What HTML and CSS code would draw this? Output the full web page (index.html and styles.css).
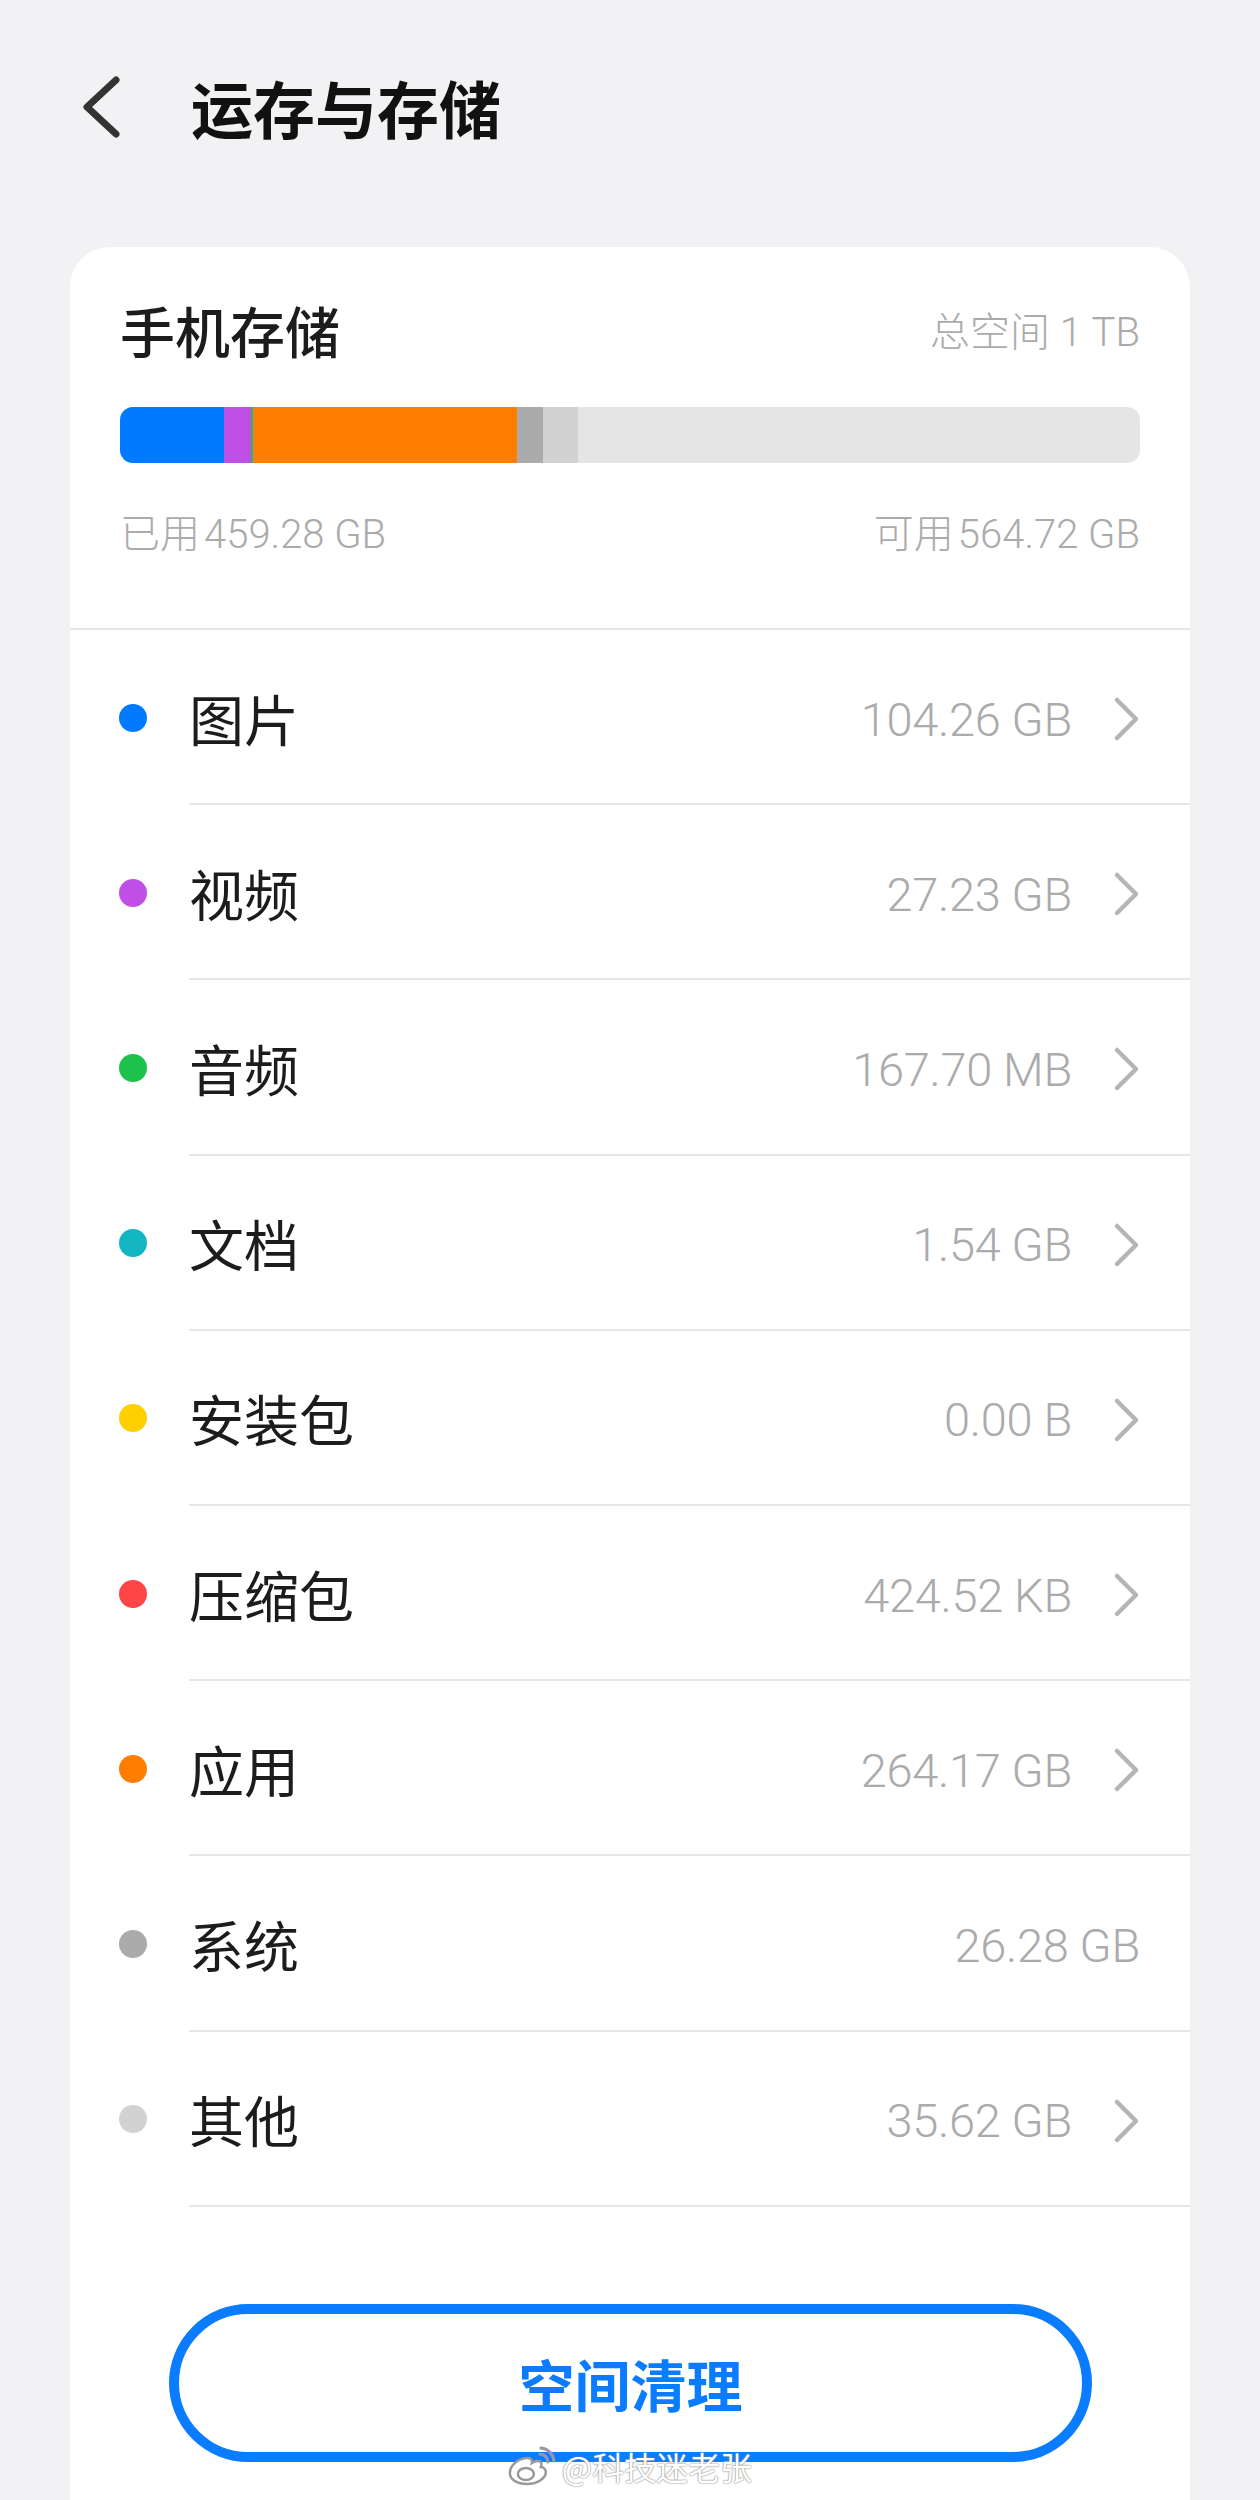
FILE: index.html
```html
<!DOCTYPE html>
<html lang="zh-CN">
<head>
  <meta charset="UTF-8">
  <title>运存与存储</title>
  <meta name="viewport" content="width=device-width, initial-scale=1.0">
  <link rel="stylesheet" href="styles.css">
</head>
<body>

  <div class="topbar">
    <svg class="back" viewBox="0 0 40 64" width="40" height="64">
      <polyline points="34,5 5,32 34,59" />
    </svg>
    <h1 class="title">运存与存储</h1>
  </div>

  <div class="card">
    <div class="summary">
      <div class="summary-head">
        <span class="summary-title">手机存储</span>
        <span class="summary-total">总空间 1 TB</span>
      </div>

      <!-- widths = size / 1024 GB -->
      <div class="usage-bar">
        <span class="seg seg-image" style="width:10.18%"></span>
        <span class="seg seg-video" style="width:2.66%"></span>
        <span class="seg seg-audio" style="width:0.1%"></span>
        <span class="seg seg-doc" style="width:0.15%"></span>
        <span class="seg seg-app" style="width:25.8%"></span>
        <span class="seg seg-system" style="width:2.57%"></span>
        <span class="seg seg-other" style="width:3.48%"></span>
      </div>

      <div class="summary-foot">
        <span>已用<span class="num">459.28 GB</span></span>
        <span>可用<span class="num">564.72 GB</span></span>
      </div>
    </div>

    <ul class="category-list">
      <li class="category">
        <span class="dot seg-image"></span>
        <div class="category-main">
          <span class="category-name">图片</span>
          <span class="category-size">104.26 GB</span>
          <svg class="arrow" viewBox="0 0 28 46" width="28" height="46"><polyline points="5,4 24,23 5,42" /></svg>
        </div>
      </li>
      <li class="category">
        <span class="dot seg-video"></span>
        <div class="category-main">
          <span class="category-name">视频</span>
          <span class="category-size">27.23 GB</span>
          <svg class="arrow" viewBox="0 0 28 46" width="28" height="46"><polyline points="5,4 24,23 5,42" /></svg>
        </div>
      </li>
      <li class="category">
        <span class="dot seg-audio"></span>
        <div class="category-main">
          <span class="category-name">音频</span>
          <span class="category-size">167.70 MB</span>
          <svg class="arrow" viewBox="0 0 28 46" width="28" height="46"><polyline points="5,4 24,23 5,42" /></svg>
        </div>
      </li>
      <li class="category">
        <span class="dot seg-doc"></span>
        <div class="category-main">
          <span class="category-name">文档</span>
          <span class="category-size">1.54 GB</span>
          <svg class="arrow" viewBox="0 0 28 46" width="28" height="46"><polyline points="5,4 24,23 5,42" /></svg>
        </div>
      </li>
      <li class="category">
        <span class="dot seg-apk"></span>
        <div class="category-main">
          <span class="category-name">安装包</span>
          <span class="category-size">0.00 B</span>
          <svg class="arrow" viewBox="0 0 28 46" width="28" height="46"><polyline points="5,4 24,23 5,42" /></svg>
        </div>
      </li>
      <li class="category">
        <span class="dot seg-zip"></span>
        <div class="category-main">
          <span class="category-name">压缩包</span>
          <span class="category-size">424.52 KB</span>
          <svg class="arrow" viewBox="0 0 28 46" width="28" height="46"><polyline points="5,4 24,23 5,42" /></svg>
        </div>
      </li>
      <li class="category">
        <span class="dot seg-app"></span>
        <div class="category-main">
          <span class="category-name">应用</span>
          <span class="category-size">264.17 GB</span>
          <svg class="arrow" viewBox="0 0 28 46" width="28" height="46"><polyline points="5,4 24,23 5,42" /></svg>
        </div>
      </li>
      <li class="category">
        <span class="dot seg-system"></span>
        <div class="category-main">
          <span class="category-name">系统</span>
          <span class="category-size">26.28 GB</span>
        </div>
      </li>
      <li class="category">
        <span class="dot seg-other"></span>
        <div class="category-main">
          <span class="category-name">其他</span>
          <span class="category-size">35.62 GB</span>
          <svg class="arrow" viewBox="0 0 28 46" width="28" height="46"><polyline points="5,4 24,23 5,42" /></svg>
        </div>
      </li>
    </ul>

    <div class="actions">
      <button class="clean-button">空间清理</button>

      <!-- Watermark over the button -->
      <div class="watermark">
        <svg class="weibo" viewBox="0 0 48 40" width="48" height="40">
          <path class="weibo-body" d="M20 12c-9 0-18 7-18 15 0 7 8 11 17 11 11 0 19-6 19-12 0-4-4-5-5-5 1-3 1-6-3-6-3 0-6 2-6 2s1-5-4-5z" />
          <ellipse class="weibo-eye" cx="18" cy="28" rx="8" ry="6" />
          <path class="weibo-wave" d="M32 8a8 8 0 0 1 8 8" />
          <path class="weibo-wave" d="M33 2a14 14 0 0 1 13 13" />
        </svg>
        <span>@科技迷老张</span>
      </div>
    </div>
  </div>

</body>
</html>
```

FILE: styles.css
```css
body {
  margin: 0;
  background-color: #f2f2f4;
  font-family: Roboto, "Noto Sans CJK SC", sans-serif;
  color: #1c1c1c;
}
ul {
  list-style: none;
  margin: 0;
  padding: 0;
}

.topbar {
  height: 214px;
  display: flex;
  align-items: center;
  padding-left: 82px;
}
.back {
  fill: none;
  stroke: #333;
  stroke-width: 7;
  stroke-linecap: round;
  stroke-linejoin: round;
}
.title {
  margin: 0 0 0 69px;
  font-family: "Noto Sans CJK SC", sans-serif;
  font-size: 62px;
  font-weight: 700;
  line-height: 62px;
  color: #111;
}

.card {
  position: relative;
  margin: 33px 70px 0;
  background: white;
  border-radius: 40px 40px 0 0;
  padding-bottom: 60px;
}

.summary {
  padding: 55px 50px 73px;
  border-bottom: 2px solid #e6e6e6;
}
.summary-head {
  height: 54px;
  display: flex;
  justify-content: space-between;
  align-items: center;
}
.summary-title {
  font-family: "Noto Sans CJK SC", sans-serif;
  font-size: 55px;
  font-weight: 500;
  line-height: 54px;
}
.summary-total, .summary-foot {
  font-size: 40px;
  font-weight: 300;
  color: #ababab;
}
.usage-bar {
  margin-top: 51px;
  height: 56px;
  border-radius: 13px;
  overflow: hidden;
  background: #e5e5e5;
  display: flex;
}
.seg {
  height: 100%;
}
.summary-foot {
  margin-top: 52px;
  height: 40px;
  line-height: 40px;
  display: flex;
  justify-content: space-between;
}
.num {
  margin-left: 4px;
}

.seg-image { background: #007aff; }
.seg-video { background: #c04fe6; }
.seg-audio { background: #1cc24c; }
.seg-doc { background: #12b6c2; }
.seg-apk { background: #ffcf00; }
.seg-zip { background: #ff4545; }
.seg-app { background: #ff7d00; }
.seg-system { background: #ababab; }
.seg-other { background: #d2d2d2; }

.category {
  display: flex;
  align-items: center;
  padding-left: 49px;
}
.dot {
  width: 28px;
  height: 28px;
  border-radius: 50%;
  margin-right: 42px;
  flex-shrink: 0;
}
.category-main {
  flex: 1;
  height: 173.2px;
  display: flex;
  align-items: center;
  padding-right: 50px;
  border-bottom: 2px solid #e6e6e6;
}
.category-name {
  flex: 1;
  font-family: "Noto Sans CJK SC", sans-serif;
  font-size: 55px;
  line-height: 60px;
}
.category-size {
  margin-top: 5px;
  font-size: 47px;
  font-weight: 300;
  color: #ababab;
  letter-spacing: -0.3px;
}
.arrow {
  margin: 5px 0 0 40px;
  fill: none;
  stroke: #b5b5b5;
  stroke-width: 4.5;
  stroke-linecap: round;
  stroke-linejoin: round;
}

.actions {
  position: relative;
  padding: 97px 98px 0 99px;
}
.clean-button {
  width: 100%;
  height: 158px;
  border: 10px solid #0a7cff;
  border-radius: 79px;
  background: white;
  color: #0a7cff;
  font-family: "Noto Sans CJK SC", sans-serif;
  font-size: 56px;
  font-weight: 700;
}

.watermark {
  position: absolute;
  left: 50%;
  top: calc(100% - 16px);
  transform: translateX(-50%);
  display: flex;
  align-items: center;
  gap: 6px;
  font-family: "Noto Sans CJK SC", sans-serif;
  font-size: 32px;
  line-height: 40px;
  color: white;
  white-space: nowrap;
  text-shadow: 0 0 2px #888, 0 0 1px #888;
}
.weibo-body, .weibo-eye {
  fill: white;
  stroke: #999;
  stroke-width: 2.5;
}
.weibo-wave {
  fill: none;
  stroke: #999;
  stroke-width: 3;
  stroke-linecap: round;
}
```
